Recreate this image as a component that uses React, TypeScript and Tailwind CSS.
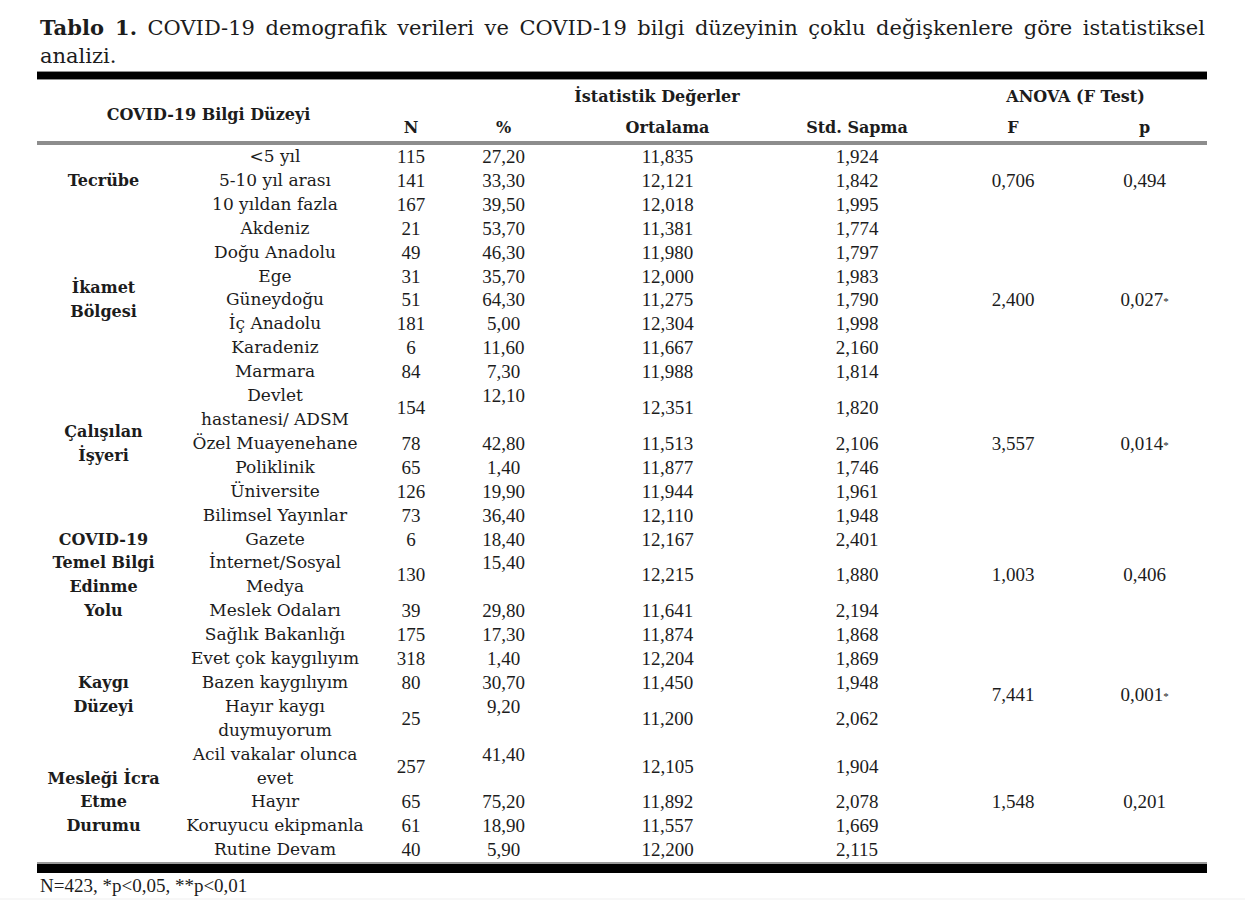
import React from "react";

type Row = { sub: string[]; n: string; pct: string; ort: string; std: string };
type Group = { label: string[]; f: string; p: string; star?: boolean; rows: Row[] };

const r = (sub: string, n: string, pct: string, ort: string, std: string): Row => ({
  sub: sub.split("|"),
  n,
  pct,
  ort,
  std,
});

const groups: Group[] = [
  {
    label: ["Tecrübe"],
    f: "0,706",
    p: "0,494",
    rows: [
      r("<5 yıl", "115", "27,20", "11,835", "1,924"),
      r("5-10 yıl arası", "141", "33,30", "12,121", "1,842"),
      r("10 yıldan fazla", "167", "39,50", "12,018", "1,995"),
    ],
  },
  {
    label: ["İkamet", "Bölgesi"],
    f: "2,400",
    p: "0,027",
    star: true,
    rows: [
      r("Akdeniz", "21", "53,70", "11,381", "1,774"),
      r("Doğu Anadolu", "49", "46,30", "11,980", "1,797"),
      r("Ege", "31", "35,70", "12,000", "1,983"),
      r("Güneydoğu", "51", "64,30", "11,275", "1,790"),
      r("İç Anadolu", "181", "5,00", "12,304", "1,998"),
      r("Karadeniz", "6", "11,60", "11,667", "2,160"),
      r("Marmara", "84", "7,30", "11,988", "1,814"),
    ],
  },
  {
    label: ["Çalışılan", "İşyeri"],
    f: "3,557",
    p: "0,014",
    star: true,
    rows: [
      r("Devlet|hastanesi/ ADSM", "154", "12,10", "12,351", "1,820"),
      r("Özel Muayenehane", "78", "42,80", "11,513", "2,106"),
      r("Poliklinik", "65", "1,40", "11,877", "1,746"),
      r("Üniversite", "126", "19,90", "11,944", "1,961"),
    ],
  },
  {
    label: ["COVID-19", "Temel Bilgi", "Edinme", "Yolu"],
    f: "1,003",
    p: "0,406",
    rows: [
      r("Bilimsel Yayınlar", "73", "36,40", "12,110", "1,948"),
      r("Gazete", "6", "18,40", "12,167", "2,401"),
      r("İnternet/Sosyal|Medya", "130", "15,40", "12,215", "1,880"),
      r("Meslek Odaları", "39", "29,80", "11,641", "2,194"),
      r("Sağlık Bakanlığı", "175", "17,30", "11,874", "1,868"),
    ],
  },
  {
    label: ["Kaygı", "Düzeyi"],
    f: "7,441",
    p: "0,001",
    star: true,
    rows: [
      r("Evet çok kaygılıyım", "318", "1,40", "12,204", "1,869"),
      r("Bazen kaygılıyım", "80", "30,70", "11,450", "1,948"),
      r("Hayır kaygı|duymuyorum", "25", "9,20", "11,200", "2,062"),
    ],
  },
  {
    label: ["Mesleği İcra", "Etme", "Durumu"],
    f: "1,548",
    p: "0,201",
    rows: [
      r("Acil vakalar olunca|evet", "257", "41,40", "12,105", "1,904"),
      r("Hayır", "65", "75,20", "11,892", "2,078"),
      r("Koruyucu ekipmanla", "61", "18,90", "11,557", "1,669"),
      r("Rutine Devam", "40", "5,90", "12,200", "2,115"),
    ],
  },
];

const serif = "font-['DejaVu_Serif',serif]";
const num = "font-['Liberation_Serif',serif] text-[19px]";

export default function App() {
  return (
    <div className="w-[1245px] h-[900px] bg-white text-[#1c1c1c] flex flex-col overflow-hidden">
      <div className={`pl-[40px] pr-[40px] pt-[14px] ${serif} text-[21px] leading-[28px]`}>
        <p className="text-justify [text-align-last:justify]">
          <b>Tablo 1.</b> COVID-19 demografik verileri ve COVID-19 bilgi düzeyinin çoklu değişkenlere göre istatistiksel
        </p>
        <p>analizi.</p>
      </div>

      <div className="ml-[37px] w-[1170px] mt-[1px]">
        <div className="h-[9px] bg-black border-y border-[#8f8f8f]" />
        <table className={`w-[1170px] table-fixed border-collapse ${serif} text-[17px]`}>
          <colgroup>
            <col className="w-[133px]" />
            <col className="w-[210px]" />
            <col className="w-[62px]" />
            <col className="w-[123px]" />
            <col className="w-[205px]" />
            <col className="w-[174px]" />
            <col className="w-[138px]" />
            <col className="w-[125px]" />
          </colgroup>
          <thead className="font-bold text-[16px]">
            <tr className="h-[31px]">
              <th colSpan={2} rowSpan={2} className="align-middle pt-[8px] border-b-[4px] border-[#8d8d8d] font-bold">
                COVID-19 Bilgi Düzeyi
              </th>
              <th colSpan={4} className="align-bottom pb-[2px] pr-[10px] font-bold">İstatistik Değerler</th>
              <th colSpan={2} className="align-bottom pb-[2px] font-bold">ANOVA (F Test)</th>
            </tr>
            <tr className="h-[32px]">
              {["N", "%", "Ortalama", "Std. Sapma", "F", "p"].map((h) => (
                <th key={h} className="border-b-[4px] border-[#8d8d8d] align-middle pt-[4px] font-bold">
                  {h}
                </th>
              ))}
            </tr>
          </thead>
          <tbody className="leading-[23.9px]">
            {groups.map((g) =>
              g.rows.map((row, i) => (
                <tr key={g.label.join() + i}>
                  {i === 0 && (
                    <td rowSpan={g.rows.length} className="text-center align-middle font-bold text-[16px]">
                      {g.label.map((l) => (
                        <div key={l}>{l}</div>
                      ))}
                    </td>
                  )}
                  <td className="text-center align-middle">
                    {row.sub.map((s) => (
                      <div key={s}>{s}</div>
                    ))}
                  </td>
                  <td className={`text-center align-middle ${num}`}>{row.n}</td>
                  <td className={`text-center align-top ${num}`}>{row.pct}</td>
                  <td className={`text-center align-middle ${num}`}>{row.ort}</td>
                  <td className={`text-center align-middle ${num}`}>{row.std}</td>
                  {i === 0 && (
                    <>
                      <td rowSpan={g.rows.length} className={`text-center align-middle ${num}`}>
                        {g.f}
                      </td>
                      <td rowSpan={g.rows.length} className={`text-center align-middle ${num}`}>
                        {g.p}
                        {g.star && <sup className="text-[11px] relative -top-[1px]">*</sup>}
                      </td>
                    </>
                  )}
                </tr>
              ))
            )}
          </tbody>
        </table>
        <div className="h-[11px] bg-black border-t-2 border-[#9a9a9a]" />
      </div>

      <p className="pl-[40px] pt-[2px] font-['Liberation_Serif',serif] text-[19px] leading-[22px]">
        N=423, *p&lt;0,05, **p&lt;0,01
      </p>
      <div className="flex-1 bg-[#f7f7f7] mt-[1px]" />
    </div>
  );
}
